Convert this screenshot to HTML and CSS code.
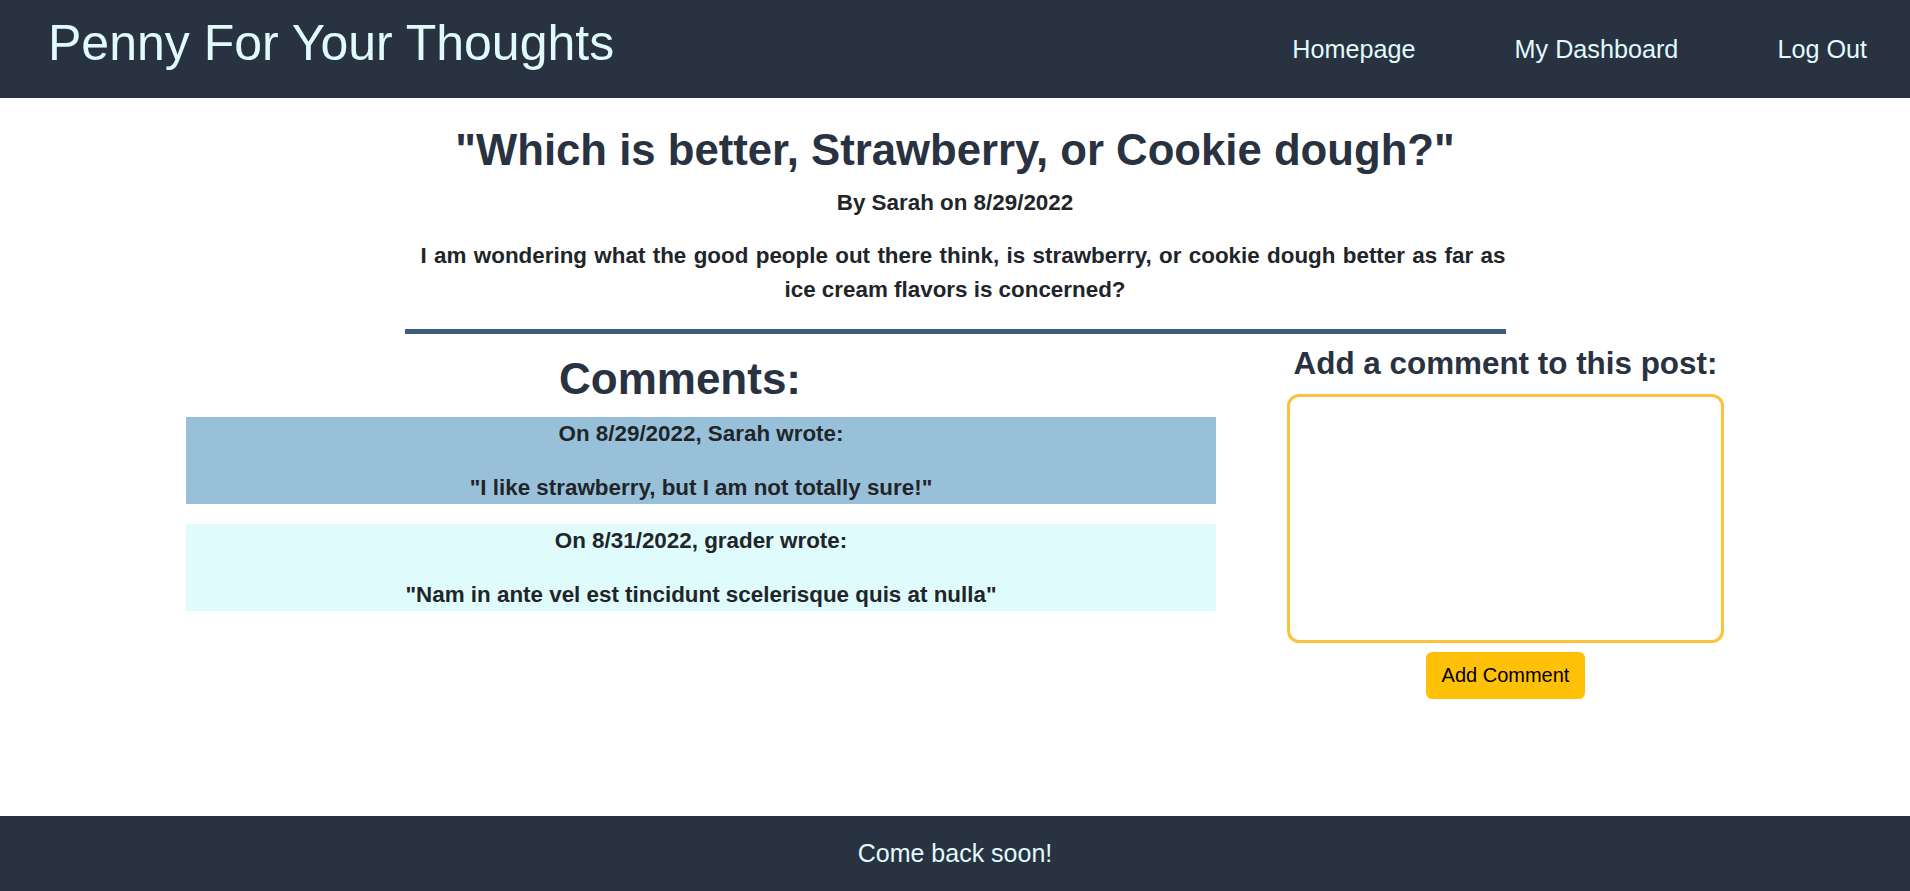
FILE: index.html
```html
<!DOCTYPE html>
<html lang="en">
<head>
<meta charset="utf-8">
<title>Penny For Your Thoughts</title>
<link rel="stylesheet" href="styles.css">
</head>
<body>
<header class="site-header">
  <a class="brand" href="#">Penny For Your Thoughts</a>
  <nav class="nav">
    <a href="#">Homepage</a>
    <a href="#">My Dashboard</a>
    <a href="#">Log Out</a>
  </nav>
</header>
<main class="page">
  <section class="post">
    <h1 class="post-title">"Which is better, Strawberry, or Cookie dough?"</h1>
    <p class="byline">By Sarah on 8/29/2022</p>
    <p class="post-body">I am wondering what the good people out there think, is strawberry, or cookie dough better as far as ice cream flavors is concerned?</p>
    <hr class="divider">
  </section>
  <section class="discussion">
    <div class="comments">
      <h2 class="comments-title">Comments:</h2>
      <div class="comment comment-a">
        <p class="comment-meta">On 8/29/2022, Sarah wrote:</p>
        <p class="comment-text">"I like strawberry, but I am not totally sure!"</p>
      </div>
      <div class="comment comment-b">
        <p class="comment-meta">On 8/31/2022, grader wrote:</p>
        <p class="comment-text">"Nam in ante vel est tincidunt scelerisque quis at nulla"</p>
      </div>
    </div>
    <form class="comment-form">
      <h3 class="form-title">Add a comment to this post:</h3>
      <textarea class="comment-input"></textarea>
      <button type="button" class="comment-button">Add Comment</button>
    </form>
  </section>
</main>
<footer class="site-footer">Come back soon!</footer>
</body>
</html>
```

FILE: styles.css
```css
html, body {
  margin: 0;
  padding: 0;
}

body {
  font-family: "Liberation Sans", Arial, sans-serif;
  color: #212529;
  background: #ffffff;
  display: flex;
  flex-direction: column;
  min-height: 100vh;
}

.site-header {
  height: 98px;
  box-sizing: border-box;
  background: #293241;
  display: flex;
  align-items: center;
  justify-content: space-between;
  padding: 0 43px 0 48px;
}

.brand {
  font-size: 50px;
  line-height: 57px;
  color: #e0fbfc;
  text-decoration: none;
  margin-bottom: 11px;
}

.nav {
  display: flex;
  gap: 99px;
}

.nav a {
  font-size: 25.2px;
  line-height: 28px;
  color: #e0fbfc;
  text-decoration: none;
}

.page {
  flex: 1;
}

.post {
  width: 1101px;
  margin: 0 auto;
  text-align: center;
}

.post-title {
  font-size: 43.7px;
  line-height: 53px;
  font-weight: bold;
  color: #293241;
  margin: 25px 0 0;
}

.byline {
  font-size: 22.4px;
  line-height: 1.5;
  font-weight: bold;
  margin: 10px 0 0;
}

.post-body {
  font-size: 22.4px;
  line-height: 34px;
  font-weight: bold;
  margin: 19px 0 0;
  text-align: justify;
  text-align-last: center;
  text-indent: 16px;
}

.divider {
  height: 5px;
  background: #3d5a80;
  border: 0;
  margin: 22px 0 0;
}

.discussion {
  display: flex;
  align-items: flex-start;
  gap: 71px;
  padding: 0 186px;
  margin-top: 11px;
}

.comments {
  flex: 1;
  text-align: center;
}

.comments-title {
  font-size: 44px;
  line-height: 1.2;
  color: #293241;
  margin: 8px 0 12px;
  padding-right: 42px;
}

.comment {
  padding: 3px 0;
  margin-bottom: 20px;
  font-size: 22.4px;
  line-height: 27px;
  font-weight: bold;
}

.comment p {
  margin: 0;
}

.comment .comment-text {
  margin-top: 27px;
}

.comment-a {
  background: #98c1d9;
}

.comment-b {
  background: #e0fbfc;
}

.comment-form {
  width: 437px;
  display: flex;
  flex-direction: column;
  align-items: center;
  margin: 0;
}

.form-title {
  font-size: 31.4px;
  line-height: 1.2;
  color: #293241;
  margin: 0;
}

.comment-input {
  display: block;
  box-sizing: border-box;
  width: 437px;
  height: 249px;
  margin-top: 12px;
  border: 3px solid #fdc13b;
  border-radius: 12px;
  resize: none;
  font-family: inherit;
}

.comment-button {
  margin-top: 9px;
  padding: 12px 16px;
  font-family: "Liberation Sans", Arial, sans-serif;
  font-size: 20px;
  line-height: 23px;
  color: #000000;
  background: #ffc107;
  border: 0;
  border-radius: 6px;
}

.site-footer {
  height: 75px;
  background: #293241;
  color: #e0fbfc;
  font-size: 25px;
  display: flex;
  align-items: center;
  justify-content: center;
}
```
